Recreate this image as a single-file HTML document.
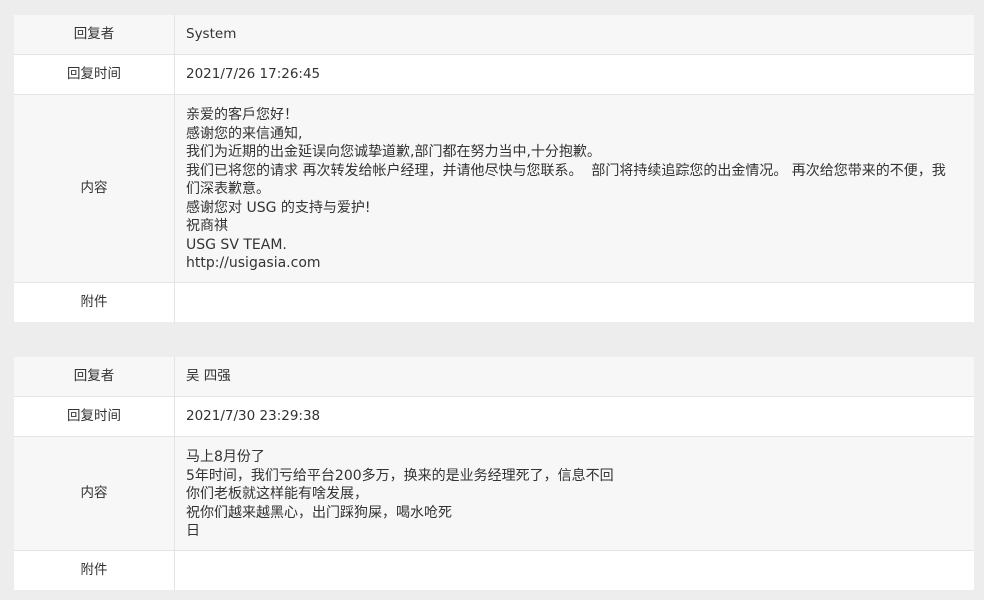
<!DOCTYPE html>
<html><head><meta charset="utf-8"><style>
body{margin:0;background:#ededed;font-family:"DejaVu Sans","Noto Sans CJK SC",sans-serif;font-size:13.5px;color:#333;width:984px;height:600px;overflow:hidden}
table{position:absolute;left:14px;width:960px;border-collapse:collapse;}
td{border-top:1px solid #e4e4e4;padding:0 11px;vertical-align:middle;line-height:18.5px}
td.l{width:138px;text-align:center;border-right:1px solid #e4e4e4;}
tr.g td{background:#f7f7f7}
tr.w td{background:#fff}
tr:first-child td{border-top:none}
.c{font-size:14px;padding-top:3px}
</style></head><body>
<table style="top:15px">
<tr class="g" style="height:39px"><td class="l">回复者</td><td>System</td></tr>
<tr class="w" style="height:40px"><td class="l">回复时间</td><td>2021/7/26 17:26:45</td></tr>
<tr class="g" style="height:188px"><td class="l">内容</td><td class="c">亲爱的客戶您好！<br>感谢您的来信通知,<br>我们为近期的出金延误向您诚挚道歉,部门都在努力当中,十分抱歉。<br>我们已将您的请求 再次转发给帐户经理，并请他尽快与您联系。&nbsp;&nbsp;部门将持续追踪您的出金情况。 再次给您带来的不便，我<br>们深表歉意。<br>感谢您对 USG 的支持与爱护!<br>祝商祺<br>USG SV TEAM.<br>http://usigasia.com</td></tr>
<tr class="w" style="height:40px"><td class="l">附件</td><td></td></tr>
</table>
<table style="top:357px">
<tr class="g" style="height:39px"><td class="l">回复者</td><td>吴 四强</td></tr>
<tr class="w" style="height:40px"><td class="l">回复时间</td><td>2021/7/30 23:29:38</td></tr>
<tr class="g" style="height:114px"><td class="l">内容</td><td class="c">马上8月份了<br>5年时间，我们亏给平台200多万，换来的是业务经理死了，信息不回<br>你们老板就这样能有啥发展，<br>祝你们越来越黑心，出门踩狗屎，喝水呛死<br>日</td></tr>
<tr class="w" style="height:40px"><td class="l">附件</td><td></td></tr>
</table>
</body></html>
